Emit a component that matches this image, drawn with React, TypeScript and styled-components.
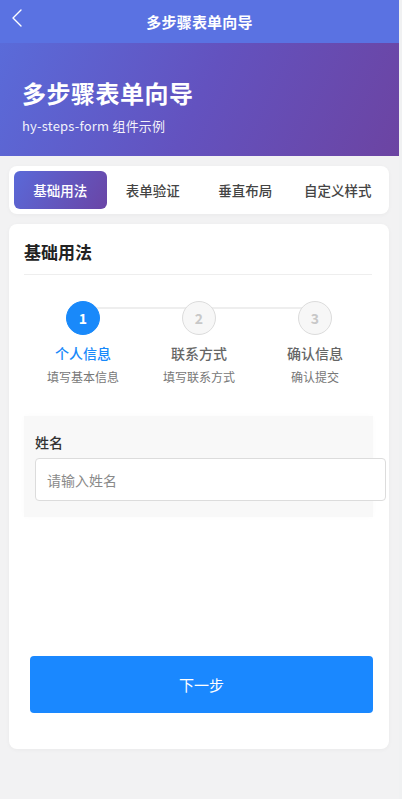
import React from 'react';
import styled, {createGlobalStyle} from 'styled-components';

const GlobalStyle = createGlobalStyle`
    html, body {
        margin: 0;
        padding: 0;
        background: #f0f1f2;
        font-family: "Noto Sans CJK SC", "Liberation Sans", sans-serif;
    }
    * {
        box-sizing: border-box;
    }
`;

const tabs = ['基础用法', '表单验证', '垂直布局', '自定义样式'];

const steps = [
    {title: '个人信息', desc: '填写基本信息'},
    {title: '联系方式', desc: '填写联系方式'},
    {title: '确认信息', desc: '确认提交'},
];

const App = () => {
    const current = 0;

    return (
        <Page>
            <GlobalStyle/>

            {/* 导航栏 */}
            <NavBar>
                <BackButton aria-label="back">
                    <svg width="12" height="18" viewBox="0 0 12 18" fill="none">
                        <polyline points="10,1 2,9 10,17" stroke="#fff" strokeWidth="1.4" strokeLinecap="round" strokeLinejoin="round"/>
                    </svg>
                </BackButton>
                <NavTitle>多步骤表单向导</NavTitle>
            </NavBar>

            {/* 头图 */}
            <Hero>
                <HeroTitle>多步骤表单向导</HeroTitle>
                <HeroSub>hy-steps-form 组件示例</HeroSub>
            </Hero>

            <Tabs>
                {tabs.map((t, i) => (
                    <Tab key={t} $active={i === 0}>{t}</Tab>
                ))}
            </Tabs>

            <Card>
                <CardTitle>基础用法</CardTitle>

                <Steps>
                    {steps.map((s, i) => (
                        <Step key={s.title}>
                            {i < steps.length - 1 && <StepLine/>}
                            <StepDot $active={i === current}>{i + 1}</StepDot>
                            <StepTitle $active={i === current}>{s.title}</StepTitle>
                            <StepDesc>{s.desc}</StepDesc>
                        </Step>
                    ))}
                </Steps>

                <FormSection>
                    <FieldLabel>姓名</FieldLabel>
                    <Input placeholder="请输入姓名"/>
                </FormSection>

                <NextButton>下一步</NextButton>
            </Card>
        </Page>
    );
};

export default App;


const Page = styled.div`
    width: 399px;
    min-height: 799px;
    background: #f2f2f3;
    padding-bottom: 50px;
`;

const NavBar = styled.div`
    height: 43px;
    background: #5a72e2;
    display: flex;
    align-items: center;
    justify-content: center;
    position: relative;
`;

const BackButton = styled.div`
    position: absolute;
    left: 11px;
    top: 9px;
    display: flex;
`;

const NavTitle = styled.div`
    color: #fff;
    font-size: 15px;
    font-weight: 700;
    letter-spacing: 0.2px;
`;

const Hero = styled.div`
    height: 113px;
    background: linear-gradient(115deg, #5a6bd9 0%, #6352bf 50%, #6c44a2 100%);
    padding: 33px 22px 0;
    color: #fff;
`;

const HeroTitle = styled.div`
    font-size: 24px;
    font-weight: 700;
    line-height: 34px;
    letter-spacing: 0.5px;
`;

const HeroSub = styled.div`
    margin-top: 7px;
    font-size: 13px;
    line-height: 18px;
    letter-spacing: 0.2px;
    opacity: 0.92;
`;

const Tabs = styled.div`
    margin: 10px 10px 0 9px;
    height: 48px;
    background: #fff;
    border-radius: 8px;
    padding: 5px;
    display: flex;
    box-shadow: 0 1px 4px rgba(0, 0, 0, 0.04);
`;

const Tab = styled.div<{$active?: boolean}>`
    flex: 1;
    display: flex;
    align-items: center;
    justify-content: center;
    border-radius: 6px;
    font-size: 13.5px;
    font-weight: 500;
    color: ${p => p.$active ? '#fff' : '#444'};
    background: ${p => p.$active ? 'linear-gradient(120deg, #5a69d8 0%, #6a45a6 100%)' : 'transparent'};
`;

const Card = styled.div`
    margin: 10px 10px 0 9px;
    background: #fff;
    border-radius: 8px;
    padding: 16px 16px 36px;
    display: flex;
    flex-direction: column;
    box-shadow: 0 1px 4px rgba(0, 0, 0, 0.04);
`;

const CardTitle = styled.div`
    font-size: 17px;
    font-weight: 700;
    color: #222;
    line-height: 24px;
    padding: 0 0 10px 0;
    border-bottom: 1px solid #eee;
    margin-right: 1px;
    margin-left: -1px;
`;

const Steps = styled.div`
    display: flex;
    margin-top: 26px;
`;

const Step = styled.div`
    flex: 1;
    display: flex;
    flex-direction: column;
    align-items: center;
    position: relative;
`;

const StepLine = styled.div`
    position: absolute;
    top: 6px;
    left: 50%;
    width: 100%;
    height: 2px;
    background: #eee;
`;

const StepDot = styled.div<{$active?: boolean}>`
    position: relative;
    width: 34px;
    height: 34px;
    border-radius: 50%;
    display: flex;
    align-items: center;
    justify-content: center;
    font-size: 14px;
    font-weight: 700;
    color: ${p => p.$active ? '#fff' : '#c8c8c8'};
    background: ${p => p.$active ? '#1989fa' : '#f7f7f7'};
    border: 1px solid ${p => p.$active ? '#1989fa' : '#dcdcdc'};
`;

const StepTitle = styled.div<{$active?: boolean}>`
    margin-top: 8px;
    font-size: 14px;
    line-height: 20px;
    font-weight: 500;
    color: ${p => p.$active ? '#1989fa' : '#666'};
`;

const StepDesc = styled.div`
    margin-top: 5px;
    font-size: 12px;
    line-height: 18px;
    color: #777;
`;

const FormSection = styled.div`
    margin-top: 30px;
    margin-left: -1px;
    background: #f8f8f8;
    padding: 16px 11px;
    box-shadow: 0 0 6px rgba(0, 0, 0, 0.02);
`;

const FieldLabel = styled.div`
    font-size: 14px;
    line-height: 20px;
    font-weight: 500;
    color: #333;
    margin-bottom: 6px;
`;

const Input = styled.input`
    display: block;
    box-sizing: content-box;
    width: 100%;
    height: 41px;
    padding: 0 11px;
    border: 1px solid #dcdcdc;
    border-radius: 4px;
    background: #fff;
    font-family: "Noto Sans CJK SC", "Liberation Sans", sans-serif;
    font-size: 14px;
    color: #333;
    outline: none;

    &::placeholder {
        color: #8a8a8a;
    }
`;

const NextButton = styled.button`
    margin: 139px 0 0 5px;
    height: 57px;
    border: none;
    border-radius: 4px;
    background: #1a88ff;
    color: #fff;
    font-family: "Noto Sans CJK SC", "Liberation Sans", sans-serif;
    font-size: 15px;
`;
